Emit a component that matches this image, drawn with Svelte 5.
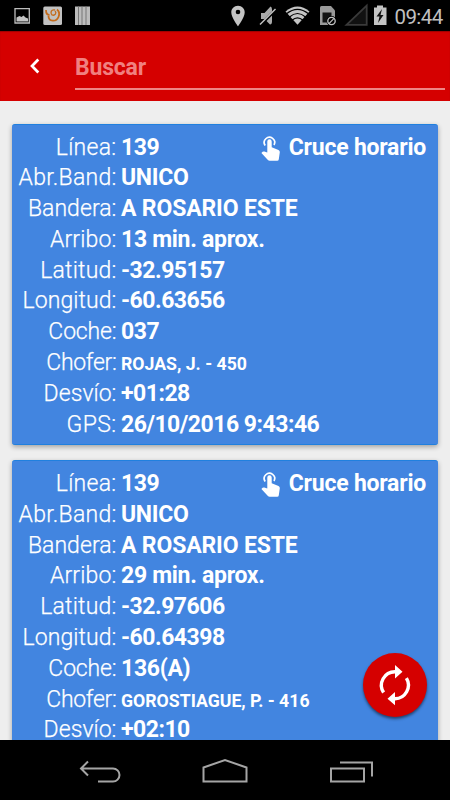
<script>
  const cards = [
    [['Línea', '139'], ['Abr.Band', 'UNICO'], ['Bandera', 'A ROSARIO ESTE'], ['Arribo', '13 min. aprox.'],
     ['Latitud', '-32.95157'], ['Longitud', '-60.63656'], ['Coche', '037'], ['Chofer', 'ROJAS, J. - 450'],
     ['Desvío', '+01:28'], ['GPS', '26/10/2016 9:43:46']],
    [['Línea', '139'], ['Abr.Band', 'UNICO'], ['Bandera', 'A ROSARIO ESTE'], ['Arribo', '29 min. aprox.'],
     ['Latitud', '-32.97606'], ['Longitud', '-60.64398'], ['Coche', '136(A)'], ['Chofer', 'GOROSTIAGUE, P. - 416'],
     ['Desvío', '+02:10']]
  ];
  const tracking = { 'Línea': 0.3, 'Abr.Band': 0.25, Bandera: 0.05, Arribo: 0.15, Latitud: 0.2, Longitud: 0.08, Coche: -0.15, Chofer: -0.3, 'Desvío': 0.05, GPS: 0.4 };
</script>

<div class="screen">
  <div class="status">
    <svg width="100" height="31" viewBox="0 0 100 31">
      <path d="M15 8.700h14.300v14.300H15z" fill="none" stroke="#bdbdbd" stroke-width="1.300" />
      <path d="M16.500 21.500v-4l3-1.500 2 1 2-1.500 2 2 2.500 1v3z" fill="#c4c4c4" />
      <rect x="43.300" y="6.500" width="18.700" height="18.500" rx="1.500" fill="#c2c2c2" />
      <path d="M46 10q0 5 3.500 5M48.500 16c0 6 8 6 10 1 1.500-4 .5-6-1.500-7.500" fill="none" stroke="#c46b1b" stroke-width="1.800" />
      <path d="M55 10c-4-1-5 3-3 5 3 1 5-2 3-4" fill="none" stroke="#c46b1b" stroke-width="1.300" />
      <rect x="75" y="6.500" width="15" height="18.500" fill="#bcbcbc" />
      <path d="M78.500 6.500V25M82 6.500V25M86 6.500V25" stroke="#777" stroke-width="1" />
    </svg>
    <div class="right">
      <svg width="168" height="31" viewBox="224 0 168 31">
        <path d="M238 5.700c-4 0-6.700 3-6.700 6.700 0 4.800 6.700 13.800 6.700 13.800s6.700-9 6.700-13.800c0-3.700-2.700-6.700-6.700-6.700z" fill="#c4c4c4" />
        <circle cx="238" cy="12" r="2.300" fill="#000" />
        <path d="M261 13h3.500l6-6.500q1.500.5 1.500 3v12q0 3-2 3l-5.500-5.500H261z" fill="#aaa" />
        <path d="M260 25.500l15.500-15.500" stroke="#000" stroke-width="3" />
        <path d="M260 24.500l15.500-15.500" stroke="#c4c4c4" stroke-width="1.400" />
        <path d="M285.500 11.500Q297.500 1.500 309.500 11.500L297.500 24.700z" fill="#c4c4c4" />
        <path d="M286.500 13.800Q297.500 5 308.500 13.800M289.500 17Q297.500 10 305.500 17M292 20.300Q297.500 15.300 303 20.300" fill="none" stroke="#000" stroke-width="1.200" />
        <path d="M320 25V7.500q0-1.500 1.500-1.500H331l4 4.500V25z" fill="#999" />
        <path d="M322.500 12.500h9v10h-9z" fill="#111" />
        <circle cx="331.500" cy="21" r="5" fill="#000" />
        <circle cx="331.500" cy="21" r="3.700" fill="none" stroke="#c4c4c4" stroke-width="1.300" />
        <path d="M329 23.600l5-5.200" stroke="#c4c4c4" stroke-width="1.200" />
        <path d="M346.500 24.800L366.700 5.500v19.300z" fill="#111" stroke="#3a3a3a" stroke-width="1.800" />
        <path d="M374 7.500h3V5.500h6v2h3.500V25H374z" fill="#c4c4c4" />
        <path d="M382 9l-5.500 7.500h3L378 23l5.500-8h-3z" fill="#111" />
      </svg>
      <span class="time">09:44</span>
    </div>
  </div>

  <header>
    <svg class="chev" width="12" height="16" viewBox="0 0 12 16"><path d="M10.300 1.500L4 8l6.300 6.500" fill="none" stroke="#fff" stroke-width="2.700" /></svg>
    <div class="field"><span>Buscar</span></div>
  </header>

  <main>
    {#each cards as rows}
      <section>
        {#each rows as [label, value], r}
          <div class="row">
            <span class="label" style="letter-spacing: {tracking[label]}px">{label}:</span>
            <b class:small={label === 'Chofer'} class:num={/^[-+\d][\d.:/ ]+$/.test(value)} class:wide={label === 'Bandera'}>{value}</b>
            {#if r === 0}
              <span class="cross">
                <svg width="20" height="28" viewBox="0 0 20 28">
                  <path d="M4.200 11.500A5.200 5.200 0 1 1 13 11" fill="none" stroke="#fff" stroke-width="1.700" />
                  <path d="M6.300 7.500a2.200 2.200 0 0 1 4.400 0v5.700l6.800 2.800q1.500.7 1.300 2.200l-1 7q-.2 1.500-1.600 1.500H8.600q-1 0-1.700-.7L.4 19l1.200-1.200q.7-.6 1.700-.3l3 .9z" fill="#fff" />
                </svg>
                <b>Cruce horario</b>
              </span>
            {/if}
          </div>
        {/each}
      </section>
    {/each}
  </main>

  <button aria-label="Actualizar">
    <svg width="64" height="64" viewBox="0 0 64 64">
      <path d="M20.600 39.500A13.500 13.500 0 0 1 32 18.700M43.400 25.200A13.500 13.500 0 0 1 32 45.700" fill="none" stroke="#fff" stroke-width="3.400" />
      <path d="M32 12l7.500 6.700-7.500 6.800zM32 39v13.300l-7.500-6.600z" fill="#fff" />
    </svg>
  </button>

  <nav>
    <svg width="450" height="60" viewBox="0 0 450 60">
      <g fill="none" stroke="#a5a5a5" stroke-width="2">
        <path d="M98 41.500h15a6.500 6.500 0 0 0 0-13H81M88 21.500l-7 7 7 7" />
        <path d="M203.500 41.500V27.500L225 20l21.500 7.500v14z" />
        <path d="M331 28.500h33v13h-33zM340 22.500h32v14" />
      </g>
    </svg>
  </nav>
</div>

<style>
  .screen { position: relative; width: 450px; height: 800px; display: flex; flex-direction: column; overflow: hidden; background: #eee; font-family: Roboto, sans-serif; color: #fff; }
  .status { height: 31px; flex: none; background: #000; display: flex; justify-content: space-between; }
  svg { display: block; flex: none; }
  .right { display: flex; width: 226px; }
  .time { color: #c0c0c0; font-size: 20.500px; line-height: 34px; margin-left: 2.500px; white-space: nowrap; letter-spacing: -.6px; }
  header { height: 70px; flex: none; background: #d50000; display: flex; align-items: flex-start; box-shadow: inset 0 1px 1px #a00000; }
  .chev { margin: 27px 0 0 28px; }
  .field { margin: 18px 5px 0 35px; flex: 1; height: 39px; border-bottom: 2px solid #ee8585; font-size: 23px; letter-spacing: -.2px; line-height: 38px; font-weight: 700; color: #f08080; }
  main { flex: 1; min-height: 0; overflow: hidden; padding: 22.500px 12px 0; }
  section { box-sizing: border-box; height: 321.500px; margin-bottom: 15px; padding: 8px 12px 0 0; background: #4285e0; border-top: 1px solid #2080df; border-bottom: 1px solid #2080df; border-radius: 3px; box-shadow: 0 2px 5px rgba(0,0,0,.32); }
  .row { display: flex; align-items: baseline; height: 30.800px; line-height: 30.800px; font-size: 23px; white-space: nowrap; }
  .label { width: 104.500px; display: flex; justify-content: flex-end; font-weight: 300; -webkit-text-stroke: .25px #fff; margin-right: 4.500px; }
  b { font-weight: 700; letter-spacing: -.3px; }
  .num { letter-spacing: -.5px; }
  .wide { letter-spacing: -.15px; }
  .small { font-size: 17.700px; letter-spacing: 0; }
  .cross { margin-left: auto; display: flex; align-items: baseline; gap: 7.500px; height: 30px; }
  .cross b { letter-spacing: -.23px; }
  .cross svg { margin: 1px 0 -6px; align-self: flex-start; }
  button { position: absolute; left: 363px; top: 653px; width: 64px; height: 64px; padding: 0; border: 0; border-radius: 50%; background: #d50000; box-shadow: 0 2px 3px rgba(0,0,0,.5); }
  nav { height: 60px; flex: none; background: #000; }
</style>
